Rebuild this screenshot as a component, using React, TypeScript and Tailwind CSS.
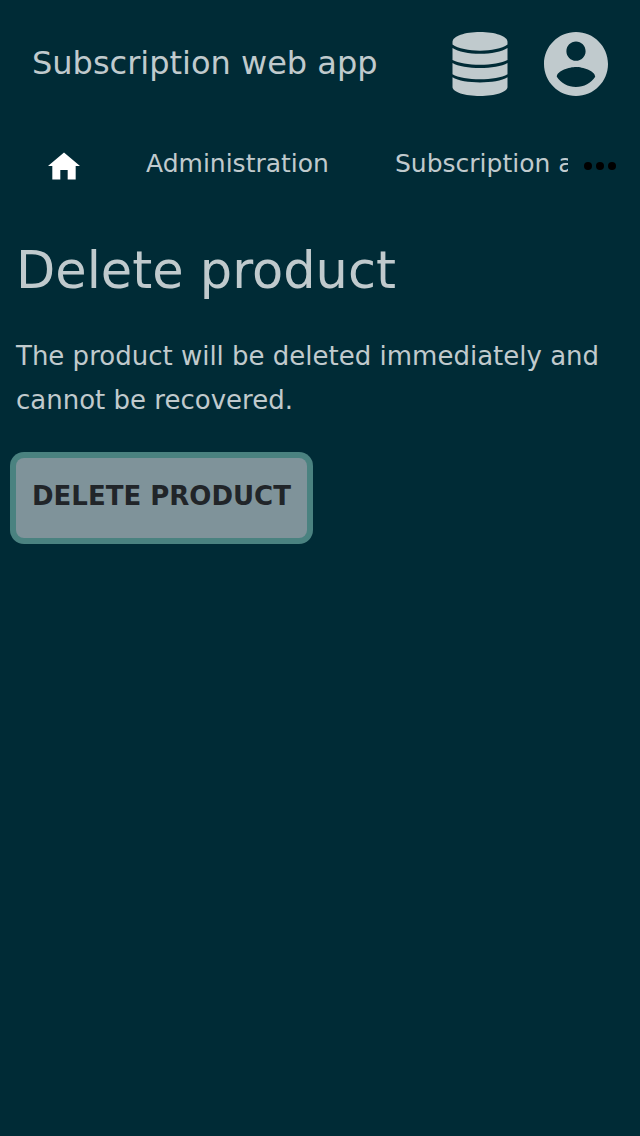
function DatabaseIcon() {
  return (
    <svg viewBox="0 0 56 64" className="h-16 w-14" fill="currentColor" aria-hidden="true">
      <path d="M.5 10C.5 4 13 0 28 0s27.500 4 27.500 10v2.500C50 16.500 39 18.700 28 18.700S6 16.500 .5 12.500z" />
      <path d="M.5 16C6 19.800 17 21.800 28 21.800S50 19.800 55.500 16v12C50 31 39 32.800 28 32.800S6 31 .5 28z" />
      <path d="M.5 31C6 34.300 17 36 28 36S50 34.300 55.500 31v11.300C50 45.500 39 47.300 28 47.300S6 45.500 .5 42.300z" />
      <path d="M.5 45.300C6 48.700 17 50.500 28 50.500S50 48.700 55.500 45.300V55c0 5-12.500 9-27.500 9S.5 60 .5 55z" />
    </svg>
  );
}

function AccountIcon() {
  return (
    <svg viewBox="2 2 20 20" className="size-16" fill="currentColor" aria-hidden="true">
      <path d="M12 2C6.480 2 2 6.480 2 12s4.480 10 10 10 10-4.480 10-10S17.520 2 12 2zm0 3c1.660 0 3 1.340 3 3s-1.340 3-3 3-3-1.340-3-3 1.340-3 3-3zm0 14.200c-2.500 0-4.710-1.280-6-3.220.030-1.990 4-3.080 6-3.080 1.990 0 5.970 1.090 6 3.080-1.290 1.940-3.500 3.220-6 3.220z" />
    </svg>
  );
}

function HomeIcon() {
  return (
    <svg viewBox="2 3 20 17" className="h-7 w-8" fill="currentColor" aria-hidden="true">
      <path d="M9.700 20v-6h4.600v6h5v-8.500H22L12 3 2 11.500h2.700V20z" />
    </svg>
  );
}

function MoreIcon() {
  return (
    <svg viewBox="0 0 32 8" className="h-2 w-8" fill="currentColor" aria-hidden="true">
      <circle cx="4" cy="4" r="4" />
      <circle cx="16" cy="4" r="4" />
      <circle cx="28" cy="4" r="4" />
    </svg>
  );
}

export default function App() {
  return (
    <div className="min-h-screen bg-[#002b36] font-['DejaVu_Sans',sans-serif] text-[26px] leading-11 text-[#c0cacd]">
      <header className="flex h-32 items-center justify-between px-8">
        <a href="#" className="pb-0.5 text-[32px] leading-12">Subscription web app</a>
        <div className="flex items-center gap-8">
          <button type="button" aria-label="Database" className="flex size-16 items-center justify-center">
            <DatabaseIcon />
          </button>
          <button type="button" aria-label="Account" className="flex size-16 items-center justify-center">
            <AccountIcon />
          </button>
        </div>
      </header>
      <nav aria-label="Main" className="flex h-18 items-center">
        <div className="flex min-w-0 flex-1 items-center gap-[66px] overflow-hidden whitespace-nowrap pl-12 text-[25px]">
          <a href="#" aria-label="Home" className="shrink-0 pt-1 text-white">
            <HomeIcon />
          </a>
          <a href="#" className="shrink-0">Administration</a>
          <a href="#" className="shrink-0">Subscription administration</a>
        </div>
        <button type="button" aria-label="More" className="flex shrink-0 pt-1 pr-6 pl-4 text-black">
          <MoreIcon />
        </button>
      </nav>
      <main className="px-4 pt-8">
        <h1 className="text-[51px] leading-[78px]">Delete product</h1>
        <p className="mt-6">The product will be deleted immediately and cannot be recovered.</p>
        <button type="button" className="mt-9 h-20 rounded-lg bg-[#7f939a] px-4 pb-1 font-bold text-[#212529] ring-6 ring-[#4a8280]">
          DELETE PRODUCT
        </button>
      </main>
    </div>
  );
}
